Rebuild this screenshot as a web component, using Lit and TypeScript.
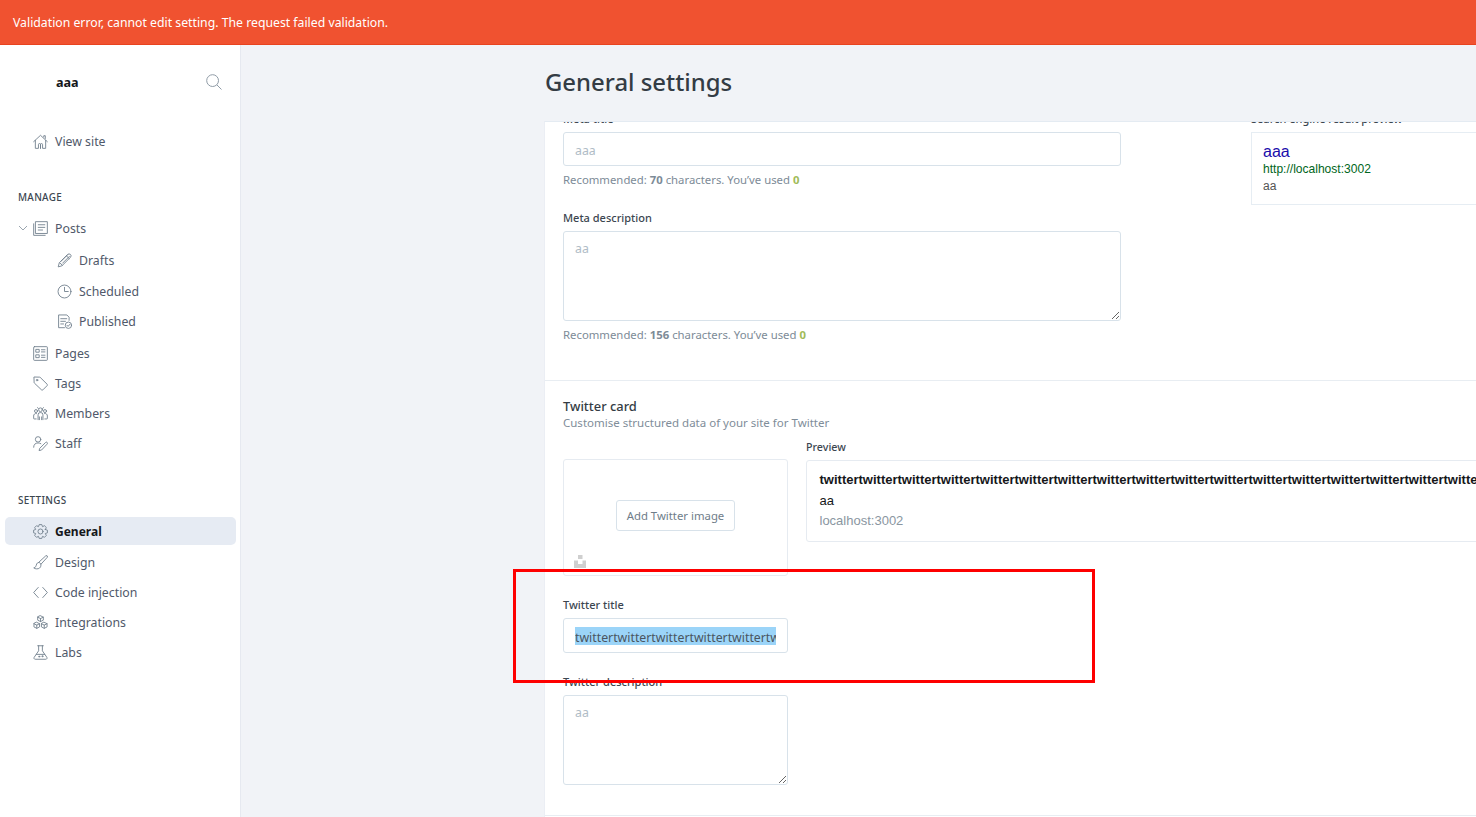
import { LitElement, html, css, svg } from "lit";
import { customElement } from "lit/decorators.js";

const gearPath = (() => {
  const cx = 8, cy = 8, teeth = 8;
  let d = "";
  for (let i = 0; i < teeth; i++) {
    const a = (i / teeth) * Math.PI * 2;
    const w = Math.PI / teeth;
    const pts: [number, number][] = [
      [5.6, a - w * 0.98],
      [7.5, a - w * 0.48],
      [7.5, a + w * 0.48],
      [5.6, a + w * 0.98],
    ];
    for (const [r, t] of pts) {
      d += `${d ? "L" : "M"}${(cx + r * Math.cos(t)).toFixed(2)} ${(cy + r * Math.sin(t)).toFixed(2)}`;
    }
  }
  return d + "Z";
})();

const icons: Record<string, unknown> = {
  home: svg`<path d="M.7 8.2 8 1.4l7.3 6.8M2.5 6.8v8.5h3.3v-4a1.1 1.1 0 0 1 2.2 0v4h0M8 15.3v-4a1.1 1.1 0 0 1 2.2 0v4h3.3V6.8M11.5 3.2V1.8h1.6v3"/>`,
  posts: svg`<path d="M3 .7h12.3v12.6H3zM.7 3v12.3h12.3M5.6 4h7M5.6 6.8h7M5.6 9.6h4.6"/>`,
  pencil: svg`<path d="M11.3 1.6a1.9 1.9 0 0 1 3.1 2.9L5.2 13.7l-3.9 1.1 1-3.9zM10 3l3.1 3M2.9 10.4 5.7 13.2M4.2 9l7.4-7.4M6 10.8l7.2-7.2"/>`,
  clock: svg`<circle cx="8" cy="8" r="6.9"/><path d="M8 3.6V8h4"/>`,
  published: svg`<path d="M8 14.6H1.7V1h8.8l2.4 2.4v3.4M4 5h6.4M4 7.8h5M4 10.6h3"/><circle cx="12.2" cy="12" r="3.4"/><path d="m10.6 12 1.2 1.2 2-2.2"/>`,
  pages: svg`<rect x=".7" y=".7" width="14.6" height="14.6" rx=".8"/><path d="M3.4 3.6h3.2v3H3.4zM3.4 9.4h3.2v3H3.4zM9 4h3.8M9 6.3h3.8M9 9.8h3.8M9 12.1h3.8"/>`,
  tag: svg`<path d="M1 1.5 1.2 7a1 1 0 0 0 .3.6l7.6 7.2a1 1 0 0 0 1.4 0l4.6-4.6a1 1 0 0 0 0-1.4L7.6 1.4A1 1 0 0 0 7 1.2z"/><circle cx="4.3" cy="4.4" r=".8"/>`,
  members: svg`<circle cx="8" cy="4" r="2"/><path d="M5.4 14.6V9.4A2.4 2.4 0 0 1 8 7a2.4 2.4 0 0 1 2.6 2.4v5.2M6.8 14.6v-3M9.2 14.6v-3"/><circle cx="3.2" cy="5.4" r="1.6"/><circle cx="12.8" cy="5.4" r="1.6"/><path d="M3.4 13.8H1.2a.5.5 0 0 1-.5-.5v-2.6a2.4 2.4 0 0 1 3-2.7M12.6 13.8h2.2a.5.5 0 0 0 .5-.5v-2.6a2.4 2.4 0 0 0-3-2.7M5.8 2.6a2 2 0 0 0-.9-.9M10.2 2.6a2 2 0 0 1 .9-.9"/>`,
  staff: svg`<circle cx="5.4" cy="3.6" r="2.9"/><path d="M.7 12c0-2.8 1.7-4.6 4.7-4.6 1.2 0 2.2.3 3 .8M8.8 15l-2.3.6.6-2.4 6.3-6.3a1.2 1.2 0 0 1 1.7 1.7z"/>`,
  gear: svg`<path d="${gearPath}"/><circle cx="8" cy="8" r="2.7"/>`,
  brush: svg`<path d="M15 1a1.1 1.1 0 0 0-1.5 0L6.3 7.6l2.2 2.2L15.1 2.6A1.1 1.1 0 0 0 15 1zM6.3 7.8C3.4 8 3.8 10.9 3 12.3c-.4.8-1.4 1.2-2.2 1.4 1.6 1.4 4.6 1.5 6.2.2 1.3-1 1.7-2.6 1.4-4"/>`,
  code: svg`<path d="M5.6 2.6.7 8l4.9 5.4M10.4 2.6 15.3 8l-4.9 5.4"/>`,
  cubes: svg`<path d="m8 .8 3 1.5v3.2L8 7 5 5.5V2.3zM5 2.3 8 3.8l3-1.5M8 3.8V7M4 7.8l3 1.5v3.4l-3 1.5-3-1.5V9.3zM1 9.3l3 1.5 3-1.5M4 10.8v3.4M12 7.8l3 1.5v3.4l-3 1.5-3-1.5V9.3zM9 9.3l3 1.5 3-1.5M12 10.8v3.4"/>`,
  flask: svg`<path d="M5 .8h6M6 .8v5.4L1.2 13.2A1.3 1.3 0 0 0 2.3 15.2h11.4a1.3 1.3 0 0 0 1.1-2L10 6.2V.8M3.6 10h8.8"/><circle cx="6.6" cy="12.4" r=".6"/><circle cx="10" cy="12" r=".6"/>`,
};

const icon = (name: string) =>
  html`<svg class="ic" viewBox="0 0 16 16" aria-hidden="true">${icons[name]}</svg>`;

@customElement("app-root")
export class AppRoot extends LitElement {
  static styles = css`
    :host {
      display: flex;
      flex-direction: column;
      height: 100vh;
      overflow: hidden;
      font-family: "Noto Sans", sans-serif;
      font-size: 12.3px;
      color: #3c4650;
      position: relative;
      background: #f1f3f7;
    }
    * { box-sizing: border-box; }

    .banner {
      flex: none;
      height: 45px;
      background: #f05230;
      border-bottom: 1px solid #e8431f;
      color: #fff;
      font-size: 12.26px;
      line-height: 46px;
      padding-left: 13px;
    }
    .body { flex: 1; display: flex; min-height: 0; }

    .side {
      flex: none;
      width: 241px;
      background: #fff;
      border-right: 1px solid #e6e9f0;
      display: flex;
      flex-direction: column;
    }
    .brand {
      display: flex;
      align-items: center;
      justify-content: space-between;
      height: 20px;
      margin: 27px 18px 0 56px;
      font-weight: 700;
      font-size: 12.6px;
      color: #15171a;
    }
    .search { width: 16px; height: 16px; fill: none; stroke: #8f9ba6; stroke-width: 1; }
    .list { display: flex; flex-direction: column; }
    .view { margin-top: 34px; }
    .row {
      display: flex;
      align-items: center;
      height: 30px;
      padding-left: 33px;
      color: #50596a;
      white-space: nowrap;
    }
    .ic {
      flex: none;
      width: 15px;
      height: 15px;
      margin-right: 7px;
      fill: none;
      stroke: #71808e;
      stroke-width: 0.95;
      stroke-linecap: round;
      stroke-linejoin: round;
    }
    .chev {
      position: absolute;
      left: 18px;
      width: 10px;
      height: 10px;
      fill: none;
      stroke: #9aa5af;
      stroke-width: 1;
    }
    .sub { margin-top: 2px; margin-bottom: 2px; gap: 1px; }
    .sub .row { padding-left: 57px; }
    .sub .row:last-child { margin-top: -1px; }
    .head {
      font-size: 9.9px;
      line-height: 14px;
      letter-spacing: 0.3px;
      text-transform: uppercase;
      color: #3c4650;
      font-weight: 500;
      padding-left: 18px;
    }
    .h-manage { margin-top: 34px; margin-bottom: 9px; }
    .h-settings { margin-top: 35px; margin-bottom: 10px; }
    .active {
      height: 28px;
      margin: 0 4px 2px 5px;
      padding-left: 28px;
      border-radius: 5px;
      background: #e6ebf3;
      color: #15171a;
      font-weight: 700;
      font-size: 12px;
    }

    .main {
      flex: 1;
      min-width: 0;
      display: flex;
      flex-direction: column;
      padding-left: 303px;
      overflow: hidden;
    }
    h1 {
      flex: none;
      margin: 0;
      height: 76px;
      padding-left: 1px;
      font-size: 23.9px;
      font-weight: 500;
      line-height: 74px;
      color: #343c44;
    }
    .card {
      flex: 1;
      min-height: 0;
      overflow: hidden;
      background: #fff;
      border-top: 1px solid #e4ebf2;
      border-left: 1px solid #ebeef4;
    }
    .meta {
      display: flex;
      gap: 130px;
      margin-top: -11px;
      padding: 0 0 0 18px;
      height: 270px;
      border-bottom: 1px solid #e8edf2;
    }
    .col { flex: none; width: 558px; }
    .label {
      display: block;
      height: 16px;
      line-height: 16px;
      font-size: 11px;
      font-weight: 500;
      color: #3c4650;
      margin-bottom: 5px;
      white-space: nowrap;
    }
    .label.first { margin-bottom: 5px; }
    .input {
      height: 34px;
      border: 1px solid #d8e2ea;
      border-radius: 3px;
      padding-left: 11px;
      line-height: 35px;
      font-size: 12.3px;
      color: #b0bcc6;
      background: #fff;
      overflow: hidden;
      white-space: nowrap;
    }
    textarea {
      display: block;
      width: 100%;
      height: 90px;
      margin: 0;
      border: 1px solid #d8e2ea;
      border-radius: 3px;
      padding: 8px 11px;
      font: inherit;
      font-size: 12.3px;
      line-height: 18px;
      color: #b0bcc6;
      background: #fff;
      outline: none;
    }
    .hint {
      font-size: 11.35px;
      line-height: 16px;
      margin-top: 6px;
      color: #7d8b97;
      white-space: nowrap;
    }
    .hint b { font-weight: 700; }
    .hint .ok { color: #9fbb58; font-weight: 700; }
    .label.gap1 { margin-top: 22px; }
    .serp {
      width: 300px;
      height: 73px;
      border: 1px solid #e6edf3;
      padding: 9px 11px;
      font-family: "Liberation Sans", Arial, sans-serif;
    }
    .serp .t { font-size: 16px; line-height: 20px; color: #1a0dab; }
    .serp .u { font-size: 12.05px; line-height: 15px; color: #006621; }
    .serp .d { font-size: 12px; line-height: 19px; color: #545454; }

    .tw { padding: 17px 0 0 18px; height: 435px; border-bottom: 1px solid #e8edf2; }
    .tw h2 {
      margin: 0;
      font-size: 12.9px;
      font-weight: 500;
      line-height: 17px;
      color: #343c44;
    }
    .tw .lead { font-size: 11.5px; line-height: 15px; color: #808d99; white-space: nowrap; }
    .twgrid { display: flex; gap: 18px; margin-top: 9px; }
    .twleft { flex: none; width: 225px; }
    .twright { flex: 1; min-width: 0; }
    .image {
      position: relative;
      margin-top: 20px;
      height: 117px;
      border: 1px solid #e6ebf1;
      border-radius: 3px;
      display: flex;
      align-items: center;
      justify-content: center;
    }
    .btn {
      height: 31px;
      margin-bottom: 5px;
      width: 119px;
      border: 1px solid #d8e2ea;
      border-radius: 3px;
      font-size: 11.35px;
      line-height: 30px;
      text-align: center;
      color: #6f7d8a;
    }
    .unsplash { position: absolute; left: 10px; bottom: 7px; width: 12px; height: 13px; fill: #cfcfcf; }
    .pv-label { margin-bottom: 5px; font-size: 10.7px; line-height: 16px; height: 16px; font-weight: 500; color: #3c4650; }
    .pv {
      height: 82px;
      margin-right: -120px;
      border: 1px solid #e6ebf1;
      border-radius: 3px;
      padding: 9px 13px 9px 12.5px;
      font-family: "Liberation Sans", Arial, sans-serif;
      white-space: nowrap;
      overflow: hidden;
      color: #15171a;
    }
    .pv .t { font-size: 13px; font-weight: 700; line-height: 19px; }
    .pv .d { font-size: 13px; line-height: 20px; margin-top: 2px; }
    .pv .u { font-size: 13px; line-height: 20px; color: #8a96a1; }
    .f-title { margin-top: 21px; }
    .f-title .label { margin-bottom: 5px; }
    .title-input { height: 35px; padding-left: 11px; padding-right: 11px; line-height: 17px; display: flex; align-items: center; color: #4a5560; }
    .sel {
      display: block;
      width: 100%;
      height: 18px;
      line-height: 21px;
      overflow: hidden;
      background: #9bd4f8;
      font-size: 12.3px;
    }
    .f-desc { margin-top: 21px; }
    .f-desc .label { margin-bottom: 5px; }

    .mark {
      position: absolute;
      left: 513px;
      top: 569px;
      width: 582px;
      height: 114px;
      border: 3px solid #fe0000;
      pointer-events: none;
    }
  `;

  render() {
    const tw = "twitter".repeat(40);
    return html`
      <div class="banner">Validation error, cannot edit setting. The request failed validation.</div>
      <div class="body">
        <nav class="side">
          <div class="brand">
            <span>aaa</span>
            <svg class="search" viewBox="0 0 16 16"><circle cx="6.6" cy="6.6" r="5.9"/><path d="m10.9 10.9 4.6 4.6"/></svg>
          </div>
          <div class="list view"><div class="row">${icon("home")}View site</div></div>
          <div class="head h-manage">Manage</div>
          <div class="list">
            <div class="row">
              <svg class="chev" viewBox="0 0 10 10"><path d="m1 3 4 4 4-4"/></svg>
              ${icon("posts")}Posts
            </div>
            <div class="list sub">
              <div class="row">${icon("pencil")}Drafts</div>
              <div class="row">${icon("clock")}Scheduled</div>
              <div class="row">${icon("published")}Published</div>
            </div>
            <div class="row">${icon("pages")}Pages</div>
            <div class="row">${icon("tag")}Tags</div>
            <div class="row">${icon("members")}Members</div>
            <div class="row">${icon("staff")}Staff</div>
          </div>
          <div class="head h-settings">Settings</div>
          <div class="list">
            <div class="row active">${icon("gear")}General</div>
            <div class="row">${icon("brush")}Design</div>
            <div class="row">${icon("code")}Code injection</div>
            <div class="row">${icon("cubes")}Integrations</div>
            <div class="row">${icon("flask")}Labs</div>
          </div>
        </nav>
        <main class="main">
          <h1>General settings</h1>
          <div class="card">
            <section class="meta">
              <div class="col">
                <label class="label first">Meta title</label>
                <div class="input">aaa</div>
                <div class="hint">Recommended: <b>70</b> characters. You’ve used <span class="ok">0</span></div>
                <label class="label gap1">Meta description</label>
                <textarea readonly>aa</textarea>
                <div class="hint">Recommended: <b>156</b> characters. You’ve used <span class="ok">0</span></div>
              </div>
              <div>
                <label class="label first">Search engine result preview</label>
                <div class="serp">
                  <div class="t">aaa</div>
                  <div class="u">http://localhost:3002</div>
                  <div class="d">aa</div>
                </div>
              </div>
            </section>
            <section class="tw">
              <h2>Twitter card</h2>
              <div class="lead">Customise structured data of your site for Twitter</div>
              <div class="twgrid">
                <div class="twleft">
                  <div class="image">
                    <div class="btn">Add Twitter image</div>
                    <svg class="unsplash" viewBox="0 0 12 13"><path d="M4 0h4.5v4H4zM0 5.5h4V9h4.5V5.5H12V13H0z"/></svg>
                  </div>
                  <div class="f-title">
                    <label class="label">Twitter title</label>
                    <div class="input title-input"><span class="sel">${tw}</span></div>
                  </div>
                  <div class="f-desc">
                    <label class="label">Twitter description</label>
                    <textarea readonly>aa</textarea>
                  </div>
                </div>
                <div class="twright">
                  <div class="pv-label">Preview</div>
                  <div class="pv">
                    <div class="t">${tw}</div>
                    <div class="d">aa</div>
                    <div class="u">localhost:3002</div>
                  </div>
                </div>
              </div>
            </section>
          </div>
        </main>
      </div>
      <div class="mark"></div>
    `;
  }
}
